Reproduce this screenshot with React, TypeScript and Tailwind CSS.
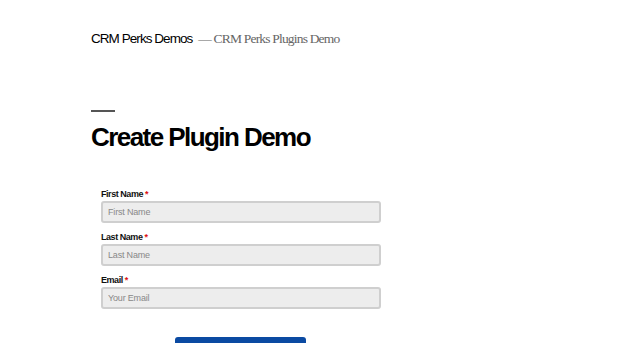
import type { JSX } from 'react';

const Field = ({ label, placeholder }: { label: string; placeholder: string }): JSX.Element => (
  <div className="flex flex-col">
    <label className="text-[9px] font-bold leading-[10px] tracking-[-0.05em] text-[#111]">
      {label} <span className="text-[#d11]">*</span>
    </label>
    <input
      className="mt-[2px] h-[22px] w-[280px] rounded-[3px] border-2 border-[#cfcfcf] bg-[#ededed] px-[5px] text-[9px] tracking-[-0.02em] text-[#333] placeholder:text-[#888] outline-none"
      placeholder={placeholder}
    />
  </div>
);

export default function App(): JSX.Element {
  return (
    <div className="h-[343px] w-[620px] overflow-hidden bg-white font-['Liberation_Sans',Arial,sans-serif]">
      <div className="pl-[91px] pt-[30px]">
        <header className="flex items-baseline gap-[6px] leading-[18px]">
          <span className="text-[13.5px] tracking-[-0.07em] text-black">CRM Perks Demos</span>
          <span className="font-['Liberation_Serif',serif] text-[13.5px] tracking-[-0.06em] text-[#666]">
            — CRM Perks Plugins Demo
          </span>
        </header>

        <div className="mt-[62px] h-[2px] w-[24px] bg-[#555]" />
        <h1 className="mt-[10px] text-[26px] font-bold leading-[30px] tracking-[-0.06em] text-black">
          Create Plugin Demo
        </h1>

        <form className="ml-[10px] mt-[37px] flex flex-col gap-[9px]">
          <Field label="First Name" placeholder="First Name" />
          <Field label="Last Name" placeholder="Last Name" />
          <Field label="Email" placeholder="Your Email" />
          <div className="mt-[19px] pl-[74px]">
            <button
              type="button"
              className="h-[44px] w-[131px] rounded-[3px] bg-[#0b4aa2] text-[12px] font-bold text-white"
            >
              Submit
            </button>
          </div>
        </form>
      </div>
    </div>
  );
}
